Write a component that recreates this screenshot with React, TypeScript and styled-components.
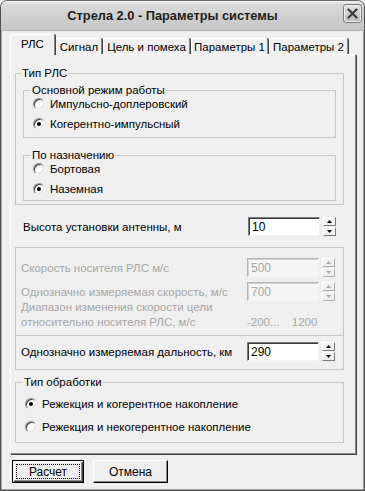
import React from 'react'
import styled, { createGlobalStyle } from 'styled-components'

const GlobalStyle = createGlobalStyle`
  html, body {
    margin: 0;
    padding: 0;
    background: #ffffff;
  }
  body {
    font-family: "Liberation Sans", Arial, sans-serif;
    font-size: 11px;
    color: #000;
  }
`

const Window = styled.div`
  width: 365px;
  height: 491px;
  box-sizing: border-box;
  border: 1px solid #4e4e4e;
  border-top-color: #6a6a6a;
  border-radius: 7px 7px 0 0;
  background: #efefef;
  box-shadow: inset 1px 0 0 #a4a4a4, inset -1px 0 0 #a4a4a4, inset 0 -1px 0 #a4a4a4;
  display: flex;
  flex-direction: column;
  overflow: hidden;
`

const TitleBar = styled.div`
  height: 29px;
  flex: none;
  display: flex;
  align-items: center;
  justify-content: center;
  position: relative;
  background: linear-gradient(to bottom, #f1f1f1 0%, #dadada 12%, #cfcfcf 55%, #c6c6c6 100%);
  border-bottom: 1px solid #b4b4b4;
`

const TitleText = styled.div`
  font-family: "Liberation Sans", Arial, sans-serif;
  font-weight: bold;
  font-size: 12.8px;
  color: #1e1e1e;
  margin-right: 20px;
`

const CloseButton = styled.div`
  position: absolute;
  right: 2px;
  top: 3px;
  width: 19px;
  height: 19px;
  box-sizing: border-box;
  border: 1px solid #7c7c7c;
  border-radius: 3px;
  background: linear-gradient(to bottom, #e4e4e4, #bcbcbc);
  box-shadow: inset 0 0 0 1px #efefef;
  display: flex;
  align-items: center;
  justify-content: center;
`

const Body = styled.div`
  flex: 1;
  display: flex;
  flex-direction: column;
  padding: 3px 8px 0 9px;
`

const TabRow = styled.div`
  display: flex;
  align-items: flex-end;
  height: 20px;
`

const Tab = styled.div<{ $active?: boolean; $w: number }>`
  position: relative;
  z-index: ${(p) => (p.$active ? 2 : 1)};
  box-sizing: border-box;
  width: ${(p) => p.$w}px;
  height: ${(p) => (p.$active ? 21 : 16)}px;
  margin-bottom: ${(p) => (p.$active ? -1 : 0)}px;
  margin-right: 1px;
  background: #efefef;
  border-top: 1px solid #ffffff;
  border-left: 1px solid #ffffff;
  border-right: 1px solid #8a8a8a;
  box-shadow: 1px 0 0 #404040;
  border-radius: 2px 2px 0 0;
  display: flex;
  align-items: center;
  justify-content: center;
  padding-bottom: ${(p) => (p.$active ? 2 : 0)}px;
  white-space: nowrap;
`

const Panel = styled.div`
  box-sizing: border-box;
  height: 400px;
  border-top: 1px solid #ffffff;
  border-left: 1px solid #ffffff;
  border-right: 1px solid #8a8a8a;
  border-bottom: 1px solid #8a8a8a;
  box-shadow: 1px 1px 0 #404040;
  padding: 0 11px 0 4px;
  display: flex;
  flex-direction: column;
`

const Group = styled.fieldset<{ $pl?: number; $pt?: number; $pb?: number; $mt?: number; $disabled?: boolean }>`
  margin: ${(p) => p.$mt ?? 0}px 0 0 0;
  padding: ${(p) => p.$pt ?? 0}px 7px ${(p) => p.$pb ?? 0}px ${(p) => p.$pl ?? 7}px;
  border: 1px solid #c6c6c6;
  min-width: 0;
  color: ${(p) => (p.$disabled ? '#a6a6a6' : '#000')};
  display: flex;
  flex-direction: column;
`

const Legend = styled.legend`
  padding: 0 1px;
  margin-left: -2px;
  line-height: 14px;
  margin-bottom: -3px;
`

const RadioRow = styled.label<{ $h?: number }>`
  height: ${(p) => p.$h ?? 20}px;
  display: flex;
  align-items: center;
  gap: 5px;
`

const RadioDot = styled.span<{ $checked?: boolean }>`
  position: relative;
  width: 12px;
  height: 12px;
  box-sizing: border-box;
  border-radius: 50%;
  background: #fff;
  border: 1px solid;
  border-color: #8e8e8e #f4f4f4 #f4f4f4 #8e8e8e;
  box-shadow: inset 1px 1px 0 #404040, inset -1px -1px 0 #dcdcdc;
  flex: none;
  &::after {
    content: '';
    display: ${(p) => (p.$checked ? 'block' : 'none')};
    position: absolute;
    left: 3px;
    top: 3px;
    width: 4px;
    height: 4px;
    border-radius: 50%;
    background: #000;
  }
`

const FieldRow = styled.div<{ $pl?: number; $pr?: number; $mt?: number }>`
  display: flex;
  align-items: center;
  justify-content: space-between;
  height: 19px;
  margin-top: ${(p) => p.$mt ?? 0}px;
  padding-left: ${(p) => p.$pl ?? 0}px;
  padding-right: ${(p) => p.$pr ?? 0}px;
`

const Spin = styled.div`
  display: flex;
  gap: 3px;
  align-items: flex-start;
`

const Input = styled.div<{ $disabled?: boolean }>`
  width: 72px;
  height: 19px;
  box-sizing: border-box;
  background: ${(p) => (p.$disabled ? '#f5f5f5' : '#ffffff')};
  border-top: 1px solid ${(p) => (p.$disabled ? '#b4b4b4' : '#7a7a7a')};
  border-left: 1px solid ${(p) => (p.$disabled ? '#b4b4b4' : '#7a7a7a')};
  border-right: 1px solid #f4f4f4;
  border-bottom: 1px solid #f4f4f4;
  box-shadow: inset 1px 1px 0 ${(p) => (p.$disabled ? '#d2d2d2' : '#3a3a3a')};
  color: ${(p) => (p.$disabled ? '#a6a6a6' : '#000')};
  font-size: 12px;
  padding: 1px 0 0 3px;
  line-height: 16px;
`

const SpinButtons = styled.div`
  display: flex;
  flex-direction: column;
  gap: 1px;
`

const SpinButton = styled.div<{ $disabled?: boolean }>`
  width: 13px;
  height: 9px;
  box-sizing: border-box;
  background: #efefef;
  border-top: 1px solid #ffffff;
  border-left: 1px solid #ffffff;
  border-right: 1px solid ${(p) => (p.$disabled ? '#b0b0b0' : '#7a7a7a')};
  border-bottom: 1px solid ${(p) => (p.$disabled ? '#b0b0b0' : '#7a7a7a')};
  display: flex;
  align-items: center;
  justify-content: center;
`

const RangeBlock = styled.div`
  display: flex;
  align-items: flex-end;
  line-height: 15px;
  margin-top: -1px;
  font-size: 11.5px;
`

const RangeLabel = styled.div`
  width: 226px;
`

const RangeValue = styled.div`
  word-spacing: 9px;
`

const ButtonRow = styled.div`
  display: flex;
  gap: 9px;
  margin: 6px 0 0 2px;
`

const Button = styled.div<{ $default?: boolean; $w: number }>`
  position: relative;
  width: ${(p) => p.$w}px;
  height: 23px;
  box-sizing: border-box;
  display: flex;
  align-items: center;
  justify-content: center;
  font-size: 12px;
  background: #efefef;
  border: 1px solid ${(p) => (p.$default ? '#000' : '#ffffff')};
  border-right-color: #000;
  border-bottom-color: #000;
  box-shadow: ${(p) =>
    p.$default
      ? 'inset 1px 1px 0 #fff, inset -1px -1px 0 #404040, inset -2px -2px 0 #8a8a8a'
      : 'inset -1px -1px 0 #8a8a8a, inset 1px 1px 0 #efefef'};
  &::after {
    content: '';
    display: ${(p) => (p.$default ? 'block' : 'none')};
    position: absolute;
    inset: 3px;
    border: 1px dotted #000;
  }
`

const Label = styled.span`
  font-size: 11.5px;
`

function Arrow({ up, disabled }: { up?: boolean; disabled?: boolean }) {
  return (
    <svg width="5" height="3" viewBox="0 0 5 3">
      <path d={up ? 'M2.5 0 L5 3 L0 3 Z' : 'M0 0 L5 0 L2.5 3 Z'} fill={disabled ? '#a8a8a8' : '#000'} />
    </svg>
  )
}

function SpinEdit({ value, disabled }: { value: string; disabled?: boolean }) {
  return (
    <Spin>
      <Input $disabled={disabled}>{value}</Input>
      <SpinButtons>
        <SpinButton $disabled={disabled}>
          <Arrow up disabled={disabled} />
        </SpinButton>
        <SpinButton $disabled={disabled}>
          <Arrow disabled={disabled} />
        </SpinButton>
      </SpinButtons>
    </Spin>
  )
}

function Radio({ label, checked, h }: { label: string; checked?: boolean; h?: number }) {
  return (
    <RadioRow $h={h}>
      <RadioDot $checked={checked} />
      <Label>{label}</Label>
    </RadioRow>
  )
}

export default function App() {
  return (
    <>
      <GlobalStyle />
      <Window>
        <TitleBar>
          <TitleText>{'Стрела 2.0 - Параметры системы'}</TitleText>
          <CloseButton>
            <svg width="11" height="11" viewBox="0 0 11 11">
              <path d="M1.5 1.5 L9.5 9.5 M9.5 1.5 L1.5 9.5" stroke="#3a3a3a" strokeWidth="2.2" strokeLinecap="round" />
            </svg>
          </CloseButton>
        </TitleBar>

        <Body>
          <TabRow>
            <Tab $active $w={45}><Label>{'РЛС'}</Label></Tab>
            <Tab $w={46}><Label>{'Сигнал'}</Label></Tab>
            <Tab $w={87}><Label>{'Цель и помеха'}</Label></Tab>
            <Tab $w={77}><Label>{'Параметры 1'}</Label></Tab>
            <Tab $w={79}><Label>{'Параметры 2'}</Label></Tab>
          </TabRow>

          <Panel>
            <Group $mt={11} $pl={7} $pb={3}>
              <Legend><Label>{'Тип РЛС'}</Label></Legend>
              <Group $mt={6} $pl={9} $pb={3}>
                <Legend><Label>{'Основной режим работы'}</Label></Legend>
                <Radio label="Импульсно-доплеровский" />
                <Radio label="Когерентно-импульсный" checked />
              </Group>
              <Group $mt={10} $pl={9} $pb={1}>
                <Legend><Label>{'По назначению'}</Label></Legend>
                <Radio label="Бортовая" />
                <Radio label="Наземная" checked />
              </Group>
            </Group>

            <FieldRow $mt={12} $pl={8} $pr={8}>
              <Label>{'Высота установки антенны, м'}</Label>
              <SpinEdit value="10" />
            </FieldRow>

            <Group $mt={11} $pl={5} $pt={10} $pb={5} $disabled>
              <FieldRow $pr={1}>
                <Label>{'Скорость носителя РЛС м/с'}</Label>
                <SpinEdit value="500" disabled />
              </FieldRow>
              <FieldRow $pr={1} $mt={5}>
                <Label>{'Однозначно измеряемая скорость, м/с'}</Label>
                <SpinEdit value="700" disabled />
              </FieldRow>
              <RangeBlock>
                <RangeLabel>
                  {'Диапазон изменения скорости цели'}
                  <br />
                  {'относительно носителя РЛС, м/с'}
                </RangeLabel>
                <RangeValue>{'-200... 1200'}</RangeValue>
              </RangeBlock>
            </Group>

            <Group $mt={-1} $pl={5} $pt={6} $pb={8}>
              <FieldRow $pr={1}>
                <Label>{'Однозначно измеряемая дальность, км'}</Label>
                <SpinEdit value="290" />
              </FieldRow>
            </Group>

            <Group $mt={5} $pl={9} $pt={6} $pb={4}>
              <Legend><Label>{'Тип обработки'}</Label></Legend>
              <Radio label="Режекция и когерентное накопление" checked h={23} />
              <Radio label="Режекция и некогерентное накопление" h={23} />
            </Group>
          </Panel>

          <ButtonRow>
            <Button $default $w={72}>{'Расчет'}</Button>
            <Button $w={75}>{'Отмена'}</Button>
          </ButtonRow>
        </Body>
      </Window>
    </>
  )
}
